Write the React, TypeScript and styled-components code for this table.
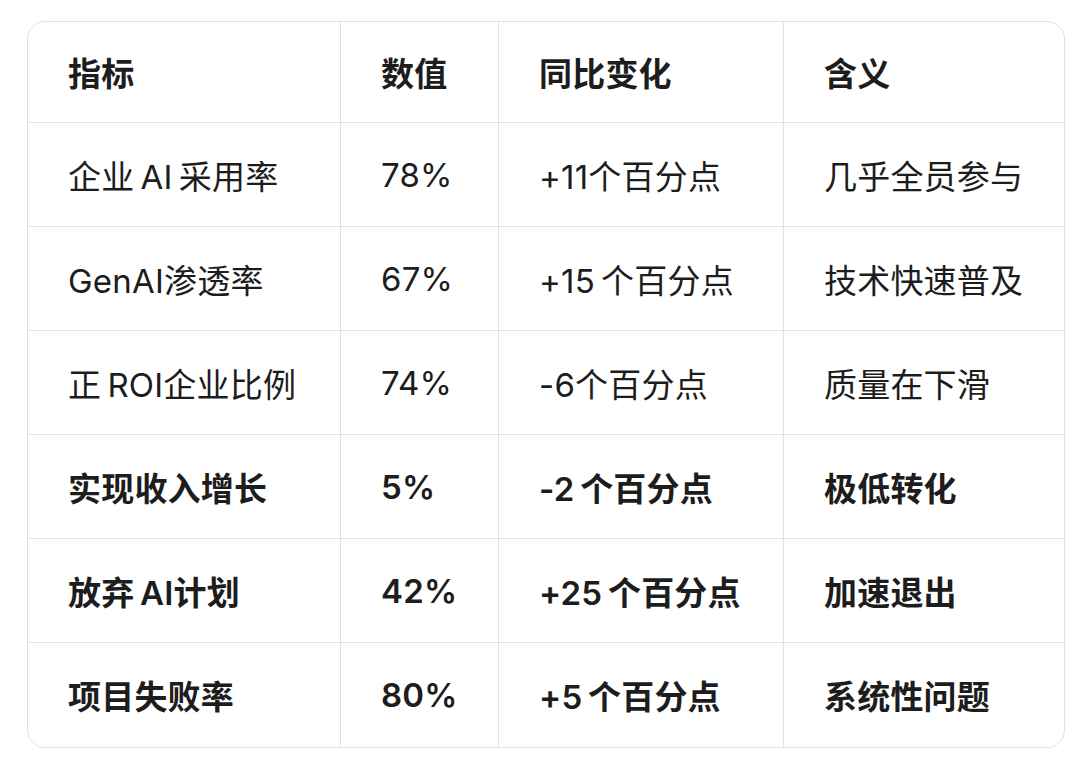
import styled, { createGlobalStyle } from 'styled-components';

const GlobalStyle = createGlobalStyle`
	html, body {
		margin: 0;
		padding: 0;
		background: #ffffff;
	}
	body {
		font-family: Inter, 'Noto Sans CJK SC', sans-serif;
		color: #1d1d1d;
	}
`;

const Page = styled.div`
	padding: 21px 0 0 27px;
`;

const Table = styled.div`
	width: 1038px;
	box-sizing: border-box;
	display: grid;
	grid-template-columns: 313px 158px 285px 1fr;
	border: 1.5px solid #e2e2e2;
	border-radius: 18px;
	overflow: hidden;
	background: #ffffff;
`;

const Cell = styled.div<{ $head?: boolean; $bold?: boolean; $lastCol?: boolean; $lastRow?: boolean }>`
	height: ${(p) => (p.$head ? '101px' : '104px')};
	box-sizing: border-box;
	display: flex;
	align-items: center;
	padding-left: 40px;
	font-size: 33px;
	font-weight: ${(p) => (p.$head || p.$bold ? 600 : 400)};
	letter-spacing: 0.2px;
	border-right: ${(p) => (p.$lastCol ? 'none' : '1px solid #e2e2e2')};
	border-bottom: ${(p) => (p.$lastRow ? 'none' : '1.5px solid #e4e4e4')};
	white-space: nowrap;
`;

const head = ['指标', '数值', '同比变化', '含义'];

const rows: { cells: string[]; bold?: boolean }[] = [
	{ cells: ['企业\u2009AI\u2009采用率', '78%', '+11个百分点', '几乎全员参与'] },
	{ cells: ['GenAI渗透率', '67%', '+15\u2009个百分点', '技术快速普及'] },
	{ cells: ['正\u2009ROI企业比例', '74%', '-6个百分点', '质量在下滑'] },
	{ cells: ['实现收入增长', '5%', '-2\u2009个百分点', '极低转化'], bold: true },
	{ cells: ['放弃\u2009AI计划', '42%', '+25\u2009个百分点', '加速退出'], bold: true },
	{ cells: ['项目失败率', '80%', '+5\u2009个百分点', '系统性问题'], bold: true },
];

const App = () => {
	return (
		<>
			<GlobalStyle />
			<Page>
				<Table>
					{head.map((h, i) => (
						<Cell key={h} $head $lastCol={i === 3}>
							{h}
						</Cell>
					))}
					{rows.map((r, ri) =>
						r.cells.map((c, ci) => (
							<Cell
								key={ri + '-' + ci}
								$bold={r.bold}
								$lastCol={ci === 3}
								$lastRow={ri === rows.length - 1}>
								{c}
							</Cell>
						))
					)}
				</Table>
			</Page>
		</>
	);
};

export default App;
